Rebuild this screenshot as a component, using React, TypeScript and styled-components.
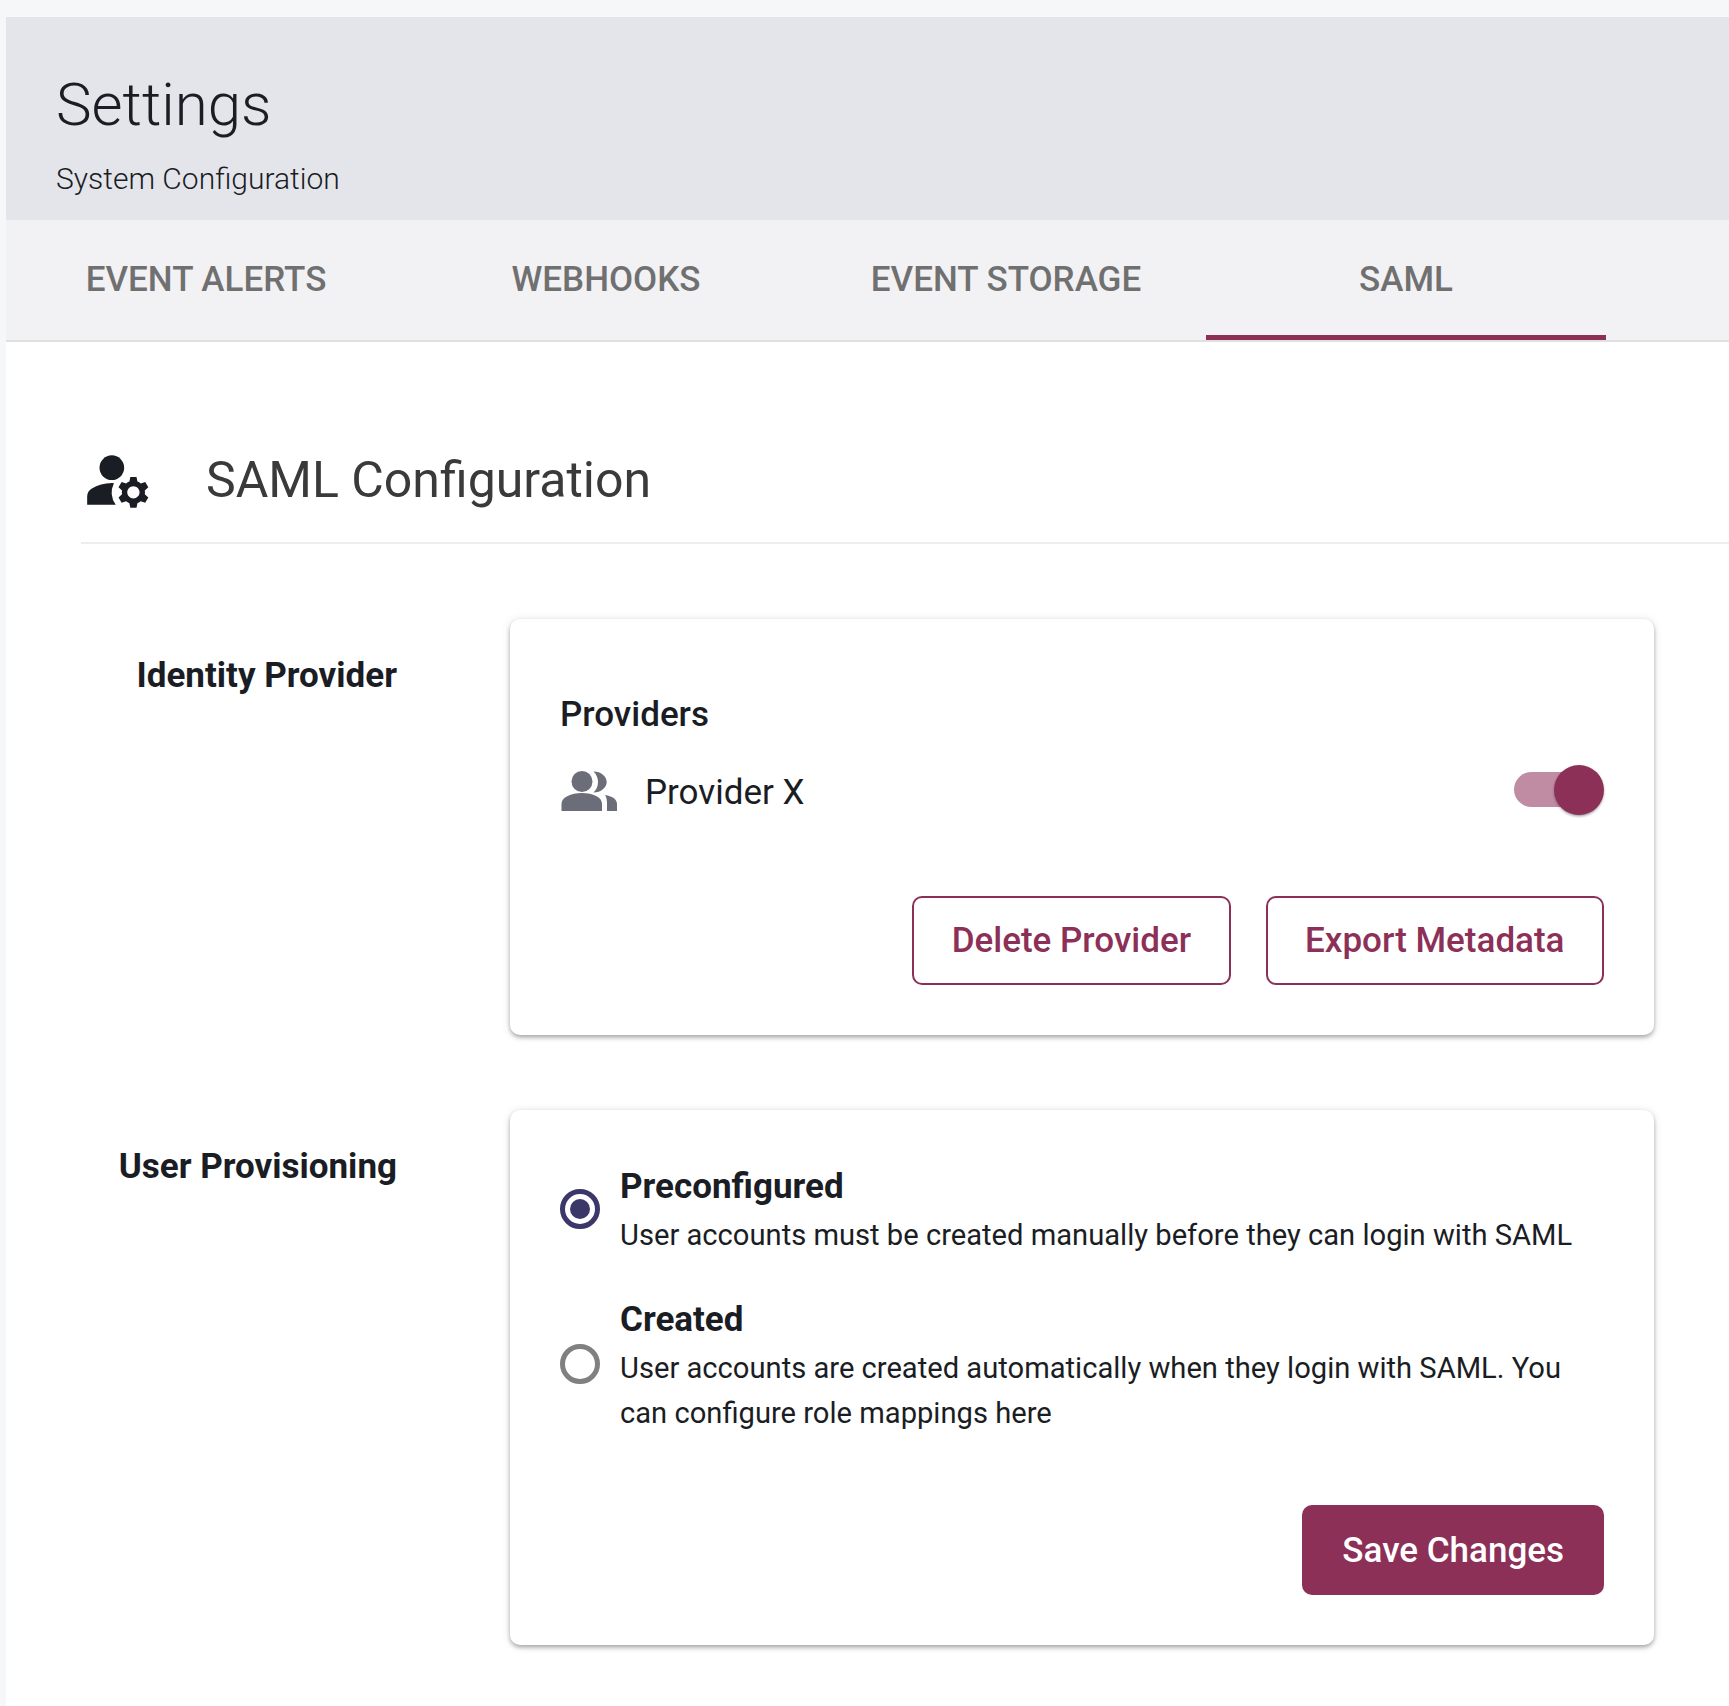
import { MdManageAccounts } from 'react-icons/md';
import styled, { createGlobalStyle } from 'styled-components';

const brand = '#8c3058';
const ink = '#1a1d24';

const GlobalStyle = createGlobalStyle`
  html, body {
    margin: 0;
    background: #f5f7f9;
    font-family: Roboto, 'Liberation Sans', sans-serif;
    color: ${ink};
  }
`;

const Page = styled.div`
  box-sizing: border-box;
  min-height: 1706px;
  padding: 17px 0 0 6px;
  display: flex;
  flex-direction: column;
`;

const Header = styled.header`
  height: 203px;
  box-sizing: border-box;
  padding: 43px 50px 0;
  background: #e4e5ea;
`;

const Title = styled.h1`
  margin: 0;
  font-size: 60px;
  line-height: 90px;
  font-weight: 300;
`;

const Subtitle = styled.div`
  margin-top: 9px;
  font-size: 30px;
  line-height: 40px;
  font-weight: 300;
`;

const Tabs = styled.nav`
  display: flex;
  height: 122px;
  box-sizing: border-box;
  background: #f2f2f5;
  border-bottom: 2px solid #e0e0e0;
`;

const Tab = styled.div<{ $active?: boolean }>`
  position: relative;
  width: 400px;
  height: 120px;
  box-sizing: border-box;
  padding-bottom: 2px;
  display: flex;
  align-items: center;
  justify-content: center;
  font-size: 35px;
  font-weight: 500;
  color: #707070;
  ${({ $active }) =>
    $active &&
    `
    &::after {
      content: '';
      position: absolute;
      left: 0;
      right: 0;
      bottom: 0;
      height: 5px;
      background: ${brand};
    }
  `}
`;

const Content = styled.main`
  flex: 1;
  background: #fff;
  padding: 75px 0 0 74px;
`;

const SectionHead = styled.div`
  display: flex;
  align-items: center;
  height: 127px;
  margin-left: 1px;
  box-sizing: border-box;
  border-bottom: 2px solid #eceef2;
`;

const HeadIcon = styled(MdManageAccounts)`
  width: 74px;
  height: 74px;
  color: ${ink};
`;

const HeadTitle = styled.h2`
  margin: 0 0 0 51px;
  font-size: 50px;
  font-weight: 400;
  color: #3a3a3a;
`;

const Section = styled.section`
  display: grid;
  grid-template-columns: 317px 1144px;
  column-gap: 113px;
  margin-top: 75px;
`;

const SectionLabel = styled.div`
  padding-top: 32px;
  text-align: right;
  font-size: 35px;
  line-height: 50px;
  font-weight: 700;
`;

const Card = styled.div`
  box-sizing: border-box;
  padding: 50px;
  border-radius: 10px;
  background: #fff;
  box-shadow: 0 3px 5px -1px rgba(0, 0, 0, 0.2), 0 1px 10px 0 rgba(0, 0, 0, 0.12),
    0 2px 4px 0 rgba(0, 0, 0, 0.14);
`;

const CardTitle = styled.div`
  margin-top: 21px;
  font-size: 35px;
  line-height: 50px;
  font-weight: 500;
`;

const ProviderRow = styled.div`
  display: flex;
  align-items: center;
  height: 64px;
  margin-top: 20px;
`;

const PeopleSvg = styled.svg`
  flex: none;
  margin: 0 0 2px 1px;
  fill: #6b6d78;
`;

const ProviderName = styled.div`
  flex: 1;
  margin-left: 28px;
  font-size: 35px;
`;

const Switch = styled.div`
  position: relative;
  width: 85px;
  height: 35px;
  margin-right: 5px;
  margin-bottom: 5px;
  border-radius: 18px;
  background: #c08ca4;
`;

const Knob = styled.div`
  position: absolute;
  top: -7px;
  right: -5px;
  width: 50px;
  height: 50px;
  border-radius: 50%;
  background: ${brand};
  box-shadow: 0 2px 3px -1px rgba(0, 0, 0, 0.3), 0 1px 3px 0 rgba(0, 0, 0, 0.2);
`;

const Actions = styled.div<{ $top: number }>`
  display: flex;
  justify-content: flex-end;
  gap: 35px;
  margin-top: ${({ $top }) => $top}px;
`;

const Button = styled.button<{ $filled?: boolean }>`
  box-sizing: border-box;
  height: ${({ $filled }) => ($filled ? 90 : 89)}px;
  padding: 0 ${({ $filled }) => ($filled ? 40 : 37.5)}px;
  border-radius: 10px;
  border: ${({ $filled }) => ($filled ? '0' : `2.5px solid ${brand}`)};
  background: ${({ $filled }) => ($filled ? brand : '#fff')};
  color: ${({ $filled }) => ($filled ? '#fff' : brand)};
  font-family: inherit;
  font-size: 35px;
  font-weight: 500;
`;

const RadioList = styled.div`
  display: flex;
  flex-direction: column;
  gap: 37px;
  padding-top: 2px;
`;

const RadioRow = styled.div`
  display: flex;
  align-items: center;
  gap: 20px;
`;

const RadioDot = styled.div<{ $on?: boolean }>`
  flex: none;
  box-sizing: border-box;
  width: 40px;
  height: 40px;
  margin-bottom: 3px;
  display: flex;
  align-items: center;
  justify-content: center;
  border-radius: 50%;
  border: 5px solid ${({ $on }) => ($on ? '#3b3768' : '#808080')};
  &::after {
    content: '';
    display: ${({ $on }) => ($on ? 'block' : 'none')};
    width: 20px;
    height: 20px;
    border-radius: 50%;
    background: #3b3768;
  }
`;

const RadioTitle = styled.div`
  font-size: 35px;
  line-height: 50px;
  font-weight: 700;
`;

const RadioText = styled.div`
  padding-top: 1px;
  font-size: 29.15px;
  line-height: 45px;
`;

const PeopleIcon = () => (
  <PeopleSvg width="56" height="40" viewBox="0 0 56 40">
    <circle cx="21" cy="10.5" r="10.5" />
    <path d="M.5 40V33C.5 26 10 22 21 22S41 26 41 33V40Z" />
    <path d="M32.5 .5C40 .5 45.7 5.5 45.7 11C45.7 16.5 40 21.5 32.5 21.5C35.5 18.5 37 15 37 11C37 7 35.5 3.5 32.5 .5Z" />
    <path d="M44 24C51 25 56 28 56 33V40H46V32C46 29.5 45.5 26 44 24Z" />
  </PeopleSvg>
);

export default function App() {
  return (
    <Page>
      <GlobalStyle />
      <Header>
        <Title>Settings</Title>
        <Subtitle>System Configuration</Subtitle>
      </Header>
      <Tabs>
        <Tab>EVENT ALERTS</Tab>
        <Tab>WEBHOOKS</Tab>
        <Tab>EVENT STORAGE</Tab>
        <Tab $active>SAML</Tab>
      </Tabs>
      <Content>
        <SectionHead>
          <HeadIcon />
          <HeadTitle>SAML Configuration</HeadTitle>
        </SectionHead>
        <Section>
          <SectionLabel>Identity Provider</SectionLabel>
          <Card>
            <CardTitle>Providers</CardTitle>
            <ProviderRow>
              <PeopleIcon />
              <ProviderName>Provider X</ProviderName>
              <Switch>
                <Knob />
              </Switch>
            </ProviderRow>
            <Actions $top={72}>
              <Button>Delete Provider</Button>
              <Button>Export Metadata</Button>
            </Actions>
          </Card>
        </Section>
        <Section>
          <SectionLabel>User Provisioning</SectionLabel>
          <Card>
            <RadioList>
              <RadioRow>
                <RadioDot $on />
                <div>
                  <RadioTitle>Preconfigured</RadioTitle>
                  <RadioText>User accounts must be created manually before they can login with SAML</RadioText>
                </div>
              </RadioRow>
              <RadioRow>
                <RadioDot />
                <div>
                  <RadioTitle>Created</RadioTitle>
                  <RadioText>
                    User accounts are created automatically when they login with SAML. You can configure role
                    mappings here
                  </RadioText>
                </div>
              </RadioRow>
            </RadioList>
            <Actions $top={69}>
              <Button $filled>Save Changes</Button>
            </Actions>
          </Card>
        </Section>
      </Content>
    </Page>
  );
}
